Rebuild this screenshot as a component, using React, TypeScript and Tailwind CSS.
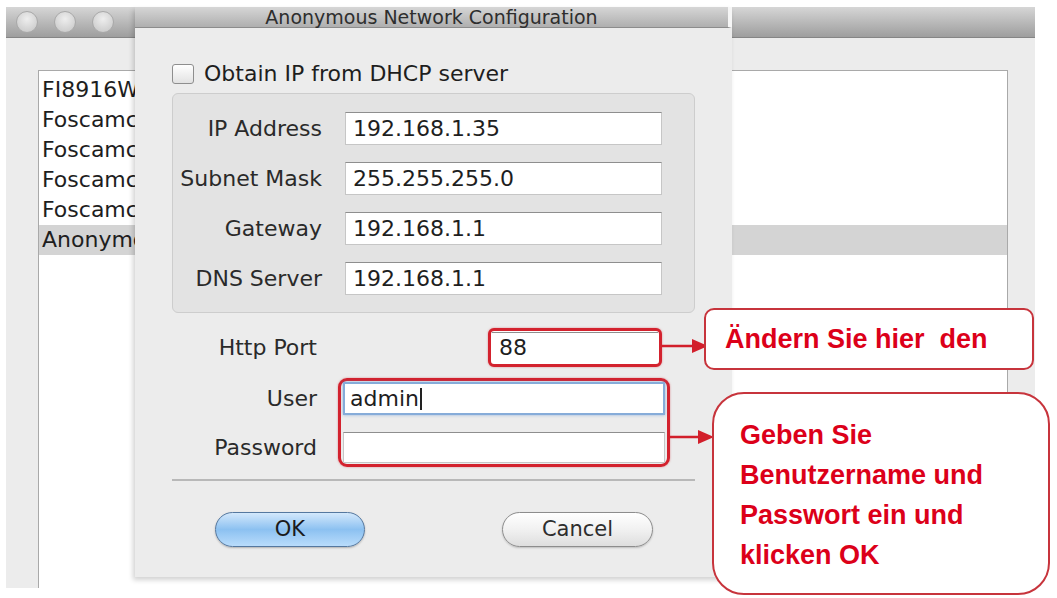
const ui = "font-['DejaVu_Sans',sans-serif]";
const note = "font-['Liberation_Sans',Arial,sans-serif]";

const devices = ["FI8916W", "Foscamc", "Foscamc", "Foscamc", "Foscamc", "Anonymous"];

const ipRows = [
  { label: "IP Address", value: "192.168.1.35" },
  { label: "Subnet Mask", value: "255.255.255.0" },
  { label: "Gateway", value: "192.168.1.1" },
  { label: "DNS Server", value: "192.168.1.1" },
];

function TrafficLight() {
  return (
    <div className="h-[22px] w-[22px] rounded-full border border-[#a9a9a9] bg-[radial-gradient(circle_at_50%_35%,#eeeeee,#c4c4c4)]" />
  );
}

function TextField({ value, className = "" }: { value?: string; className?: string }) {
  return (
    <div
      className={`flex items-center border border-[#c6c6c6] border-t-[#8e8e8e] bg-white pl-[7px] text-[22px] leading-none text-[#1e1e1e] ${className}`}
    >
      {value}
    </div>
  );
}

function Arrow({ x, y, length }: { x: number; y: number; length: number }) {
  return (
    <svg
      className="absolute"
      style={{ left: x, top: y - 8 }}
      width={length}
      height={16}
      viewBox={`0 0 ${length} 16`}
    >
      <line x1={0} y1={8} x2={length - 14} y2={8} stroke="#d21f2b" strokeWidth={2.5} />
      <polygon points={`${length - 16},1 ${length},8 ${length - 16},15`} fill="#d21f2b" />
    </svg>
  );
}

export default function App() {
  return (
    <div className={`relative h-[598px] w-[1057px] overflow-hidden bg-white ${ui}`}>
      {/* camera list window behind the sheet */}
      <div className="absolute left-[6px] top-[7px] flex h-[581px] w-[1029px] flex-col">
        <div className="flex h-[31px] items-center gap-[16px] border-b border-[#858585] bg-linear-to-b from-[#d6d6d6] to-[#9e9e9e] pl-[10px]">
          <TrafficLight />
          <TrafficLight />
          <TrafficLight />
        </div>
        <div className="flex flex-1 bg-[#ececec] pl-[32px] pr-[27px] pt-[32px]">
          <div className="flex-1 border-x border-t border-[#a9a9a9] bg-white pt-[4px]">
            {devices.map((name, i) => (
              <div
                key={i}
                className={`flex h-[30px] items-center pl-[3px] text-[22px] leading-none text-[#1e1e1e] ${
                  i === devices.length - 1 ? "bg-[#d4d4d4]" : ""
                }`}
              >
                {name}
              </div>
            ))}
          </div>
        </div>
      </div>

      {/* network configuration sheet */}
      <div className="absolute left-[135px] top-[7px] flex h-[570px] w-[597px] flex-col bg-[#ececec] shadow-[-2px_3px_5px_rgba(0,0,0,0.18)]">
        <div className="flex h-[21px] items-center justify-center border-b border-r-4 border-b-[#8c8c8c] border-r-[#f6f6f6] bg-linear-to-b from-[#d6d6d6] to-[#afafaf] text-[19px] leading-none text-[#2e2e2e]">
          Anonymous Network Configuration
        </div>

        <div className="flex flex-1 flex-col px-[37px] pt-[35px]">
          <div className="flex h-[22px] items-center gap-[10px]">
            <div className="h-[20px] w-[22px] rounded-[3px] border border-[#8e8e8e] bg-linear-to-b from-white to-[#e2e2e2]" />
            <span className="text-[22px] leading-none text-[#1e1e1e]">Obtain IP from DHCP server</span>
          </div>

          <div className="mt-[8px] flex h-[220px] flex-col gap-[17px] rounded-[6px] border border-[#cdcdcd] bg-[#e3e3e3] pt-[18px]">
            {ipRows.map((row) => (
              <div key={row.label} className="flex items-center">
                <span className="w-[149px] text-right text-[22px] leading-none text-[#2a2a2a]">{row.label}</span>
                <TextField value={row.value} className="ml-[23px] h-[33px] w-[317px]" />
              </div>
            ))}
          </div>

          <div className="mt-[15px] flex h-[39px] items-center">
            <span className="w-[145px] text-right text-[22px] leading-none text-[#2a2a2a]">Http Port</span>
            <div className="ml-[171px] h-[39px] w-[174px] rounded-[6px] border-[3px] border-[#d3222e] bg-white p-[1px] shadow-[0_0_2px_rgba(210,30,40,0.5)]">
              <TextField value="88" className="h-full border-x-0 border-b-0 pl-[5px]" />
            </div>
          </div>

          <div className="mt-[11px] flex">
            <div className="flex w-[145px] flex-col pt-[4px]">
              <span className="flex h-[33px] items-center justify-end text-[22px] leading-none text-[#2a2a2a]">User</span>
              <span className="mt-[17px] flex h-[31px] items-center justify-end text-[22px] leading-none text-[#2a2a2a]">
                Password
              </span>
            </div>
            <div className="ml-[21px] flex h-[89px] w-[332px] flex-col rounded-[9px] border-[3px] border-[#d3222e] px-[2px] pt-[1px] shadow-[0_0_2px_rgba(210,30,40,0.5)]">
              <div className="flex h-[33px] items-center border-2 border-[#86acd9] bg-white pl-[5px] text-[22px] leading-none text-[#1e1e1e] shadow-[0_0_3px_rgba(90,140,210,0.6)]">
                admin
                <span className="ml-[1px] h-[22px] w-[2px] bg-[#222]" />
              </div>
              <TextField className="mt-[17px] h-[31px]" />
            </div>
          </div>

          <div className="mt-[12px] h-[2px] bg-[#b8b8b8]" />

          <div className="mt-[31px] flex">
            <button className="ml-[43px] flex h-[35px] w-[150px] items-center justify-center rounded-full border border-[#55789f] bg-linear-to-b from-[#d3e8fb] via-[#8cc1f1] to-[#b9dcfb] text-[21px] leading-none text-[#1b1b1b] shadow-[0_1px_2px_rgba(0,0,0,0.25)]">
              OK
            </button>
            <button className="ml-[137px] flex h-[35px] w-[151px] items-center justify-center rounded-full border border-[#8d8d8d] bg-linear-to-b from-white via-[#f1f1f1] to-[#dedede] text-[21px] leading-none text-[#2e2e2e] shadow-[0_1px_2px_rgba(0,0,0,0.2)]">
              Cancel
            </button>
          </div>
        </div>
      </div>

      {/* annotations */}
      <Arrow x={662} y={346} length={46} />
      <Arrow x={668} y={437} length={46} />

      <div
        className={`absolute left-[704px] top-[308px] flex h-[62px] w-[330px] items-center rounded-[10px] border-2 border-[#c7343c] bg-white pl-[19px] text-[27px] font-bold leading-none whitespace-pre text-[#dc0019] ${note}`}
      >
        Ändern Sie hier  den
      </div>

      <div
        className={`absolute left-[712px] top-[392px] h-[203px] w-[338px] rounded-[32px] border-2 border-[#c7343c] bg-white pl-[26px] pt-[21px] text-[27px] font-bold leading-[40px] text-[#dc0019] ${note}`}
      >
        <div>Geben Sie</div>
        <div>Benutzername und</div>
        <div>Passwort ein und</div>
        <div>klicken OK</div>
      </div>
    </div>
  );
}
